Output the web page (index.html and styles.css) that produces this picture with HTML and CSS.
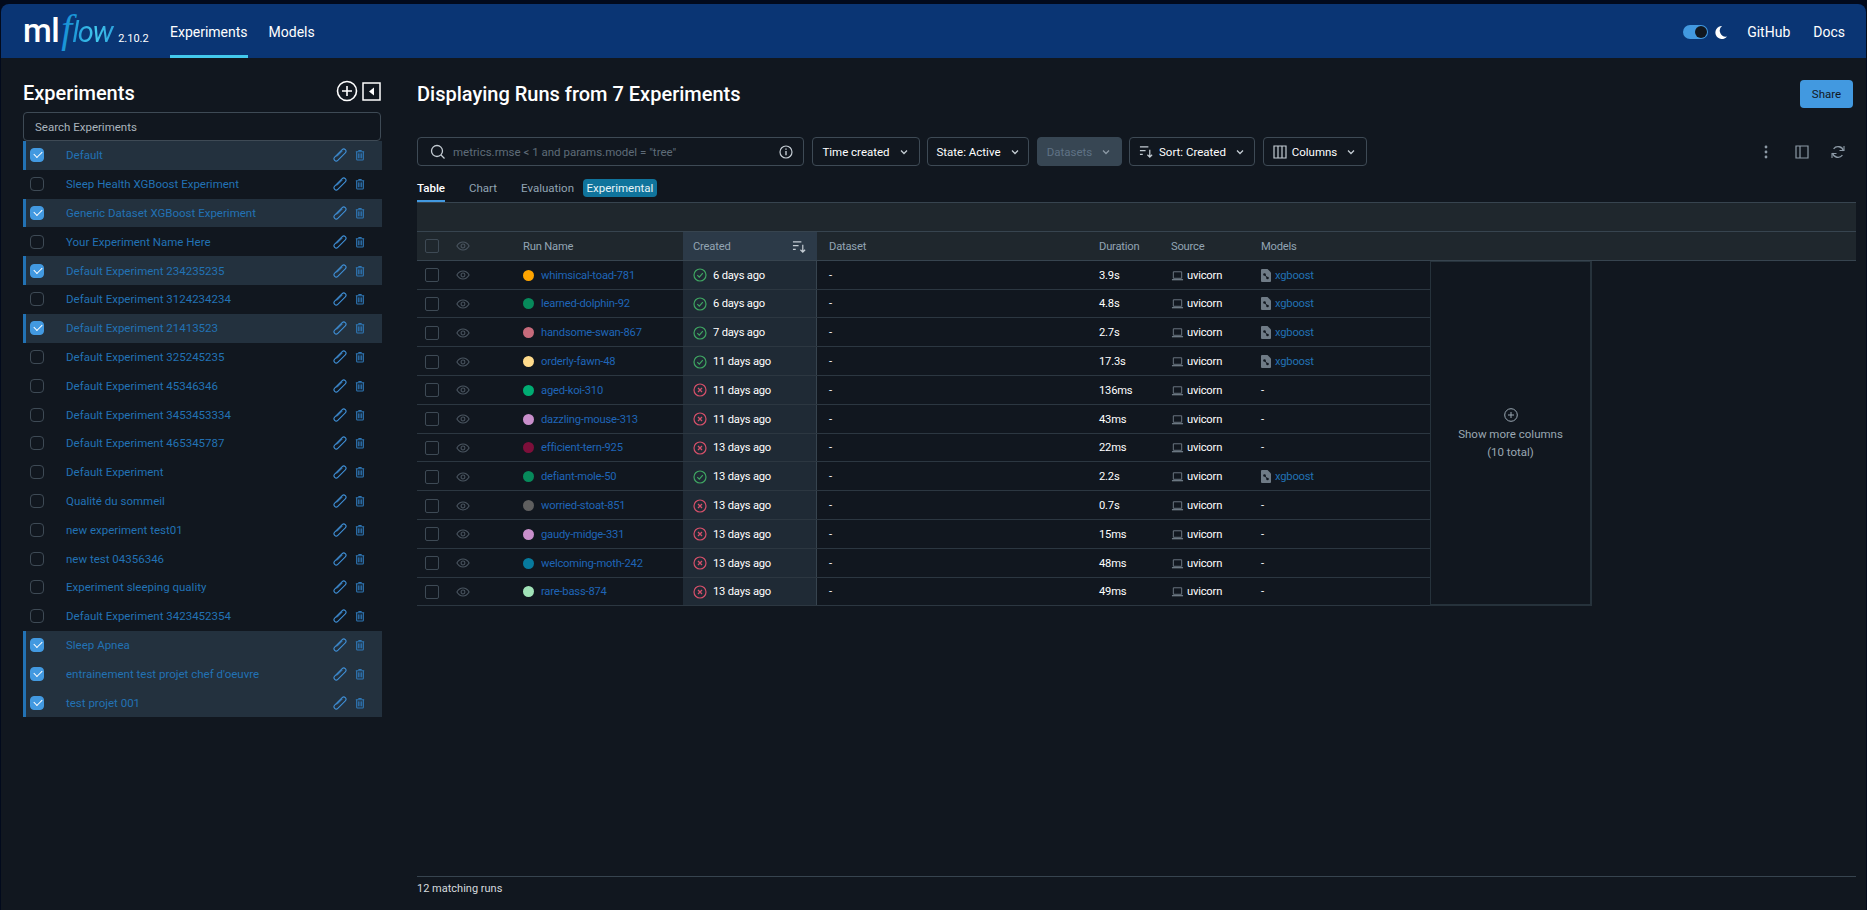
FILE: index.html
```html
<!DOCTYPE html>
<html lang="en">
<head>
    <meta charset="UTF-8">
    <title>MLflow</title>
    <link rel="stylesheet" href="styles.css">
</head>
<body>

    <!-- Icons -->
    <svg class="sprite" width="0" height="0">
        <symbol id="i-pencil" viewBox="0 0 14 14"><rect x="4.800" y="-0.500" width="4.400" height="15" rx="2.200" transform="rotate(45 7 7)" fill="none" stroke="currentColor" stroke-width="1.100"/><path d="M9.500 2.800L3.800 8.500" stroke="currentColor" stroke-width="1"/></symbol>
        <symbol id="i-trash" viewBox="0 0 12 14"><path d="M4 1.500h4M1 3h10M2 3v9a1 1 0 0 0 1 1h6a1 1 0 0 0 1-1V3" fill="none" stroke="currentColor" stroke-width="1.300"/><path d="M4 5v6M6 5v6M8 5v6" stroke="currentColor" stroke-width="1.200"/></symbol>
        <symbol id="i-eye" viewBox="0 0 16 16"><path d="M1 8c1.800-3 4.200-4.500 7-4.500S13.200 5 15 8c-1.800 3-4.200 4.500-7 4.500S2.800 11 1 8z" fill="none" stroke="currentColor" stroke-width="1.200"/><circle cx="8" cy="8" r="2.200" fill="none" stroke="currentColor" stroke-width="1.200"/></symbol>
        <symbol id="i-ok" viewBox="0 0 14 14"><circle cx="7" cy="7" r="6" fill="none" stroke="currentColor" stroke-width="1.200"/><path d="M4.300 7.200l2 2 3.500-4" fill="none" stroke="currentColor" stroke-width="1.200"/></symbol>
        <symbol id="i-fail" viewBox="0 0 14 14"><circle cx="7" cy="7" r="6" fill="none" stroke="currentColor" stroke-width="1.200"/><path d="M5 5l4 4M9 5l-4 4" fill="none" stroke="currentColor" stroke-width="1.300"/></symbol>
        <symbol id="i-laptop" viewBox="0 0 14 14"><path d="M2.500 3h9v7h-9z" fill="none" stroke="currentColor" stroke-width="1"/><path d="M1 11.500h12" stroke="currentColor" stroke-width="1.400"/></symbol>
        <symbol id="i-model" viewBox="0 0 10 13"><path d="M1 0h5.500L10 3.500V12a1 1 0 0 1-1 1H1a1 1 0 0 1-1-1V1a1 1 0 0 1 1-1z" fill="currentColor"/><circle cx="3.500" cy="5.500" r="1.300" fill="#11171f"/><circle cx="6.500" cy="9" r="1.300" fill="#11171f"/><path d="M3.500 5.500l3 3.500" stroke="#11171f"/></symbol>
        <symbol id="i-chevron" viewBox="0 0 10 10"><path d="M2 3.500l3 3 3-3" fill="none" stroke="currentColor" stroke-width="1.300"/></symbol>
        <symbol id="i-sort" viewBox="0 0 16 16"><path d="M1 3h9M1 7h6M1 11h3M11.500 6v8M9 11.500l2.500 2.500 2.500-2.500" fill="none" stroke="currentColor" stroke-width="1.300"/></symbol>
    </svg>

    <div class="app">

        <!-- Top bar -->
        <header class="topbar">
            <div class="logo">
                <span class="logo-ml">ml</span><span class="logo-f">f</span><span class="logo-low">low</span>
                <span class="version">2.10.2</span>
            </div>
            <nav class="nav">
                <a class="nav-link active" href="#">Experiments</a>
                <a class="nav-link" href="#">Models</a>
            </nav>
            <div class="topbar-right">
                <span class="toggle"><span class="toggle-knob"></span></span>
                <svg class="moon" viewBox="0 0 12 13" width="12" height="13"><path d="M7 0a6.500 6.500 0 1 0 5 10.500A6 6 0 0 1 7 0z" fill="#fff"/></svg>
                <a class="top-link" href="#">GitHub</a>
                <a class="top-link" href="#">Docs</a>
            </div>
        </header>

        <div class="content">

            <!-- Experiment list -->
            <aside class="sidebar">
                <div class="side-head">
                    <h2>Experiments</h2>
                    <svg class="side-plus" viewBox="0 0 22 22" width="22" height="22"><circle cx="11" cy="11" r="9.500" fill="none" stroke="#fff" stroke-width="1.600"/><path d="M11 6v10M6 11h10" stroke="#fff" stroke-width="1.600"/></svg>
                    <svg class="side-collapse" viewBox="0 0 19 19" width="19" height="19"><rect x="1" y="1" width="17" height="17" fill="none" stroke="#fff" stroke-width="1.500"/><path d="M7 9.500l5-4v8z" fill="#fff"/></svg>
                </div>
                <div class="side-search">Search Experiments</div>
                <ul class="exp-list">
                    <li class="exp on"><span class="check"></span><span class="exp-name">Default</span><svg class="pen"><use href="#i-pencil"/></svg><svg class="bin"><use href="#i-trash"/></svg></li>
                    <li class="exp"><span class="check"></span><span class="exp-name">Sleep Health XGBoost Experiment</span><svg class="pen"><use href="#i-pencil"/></svg><svg class="bin"><use href="#i-trash"/></svg></li>
                    <li class="exp on"><span class="check"></span><span class="exp-name">Generic Dataset XGBoost Experiment</span><svg class="pen"><use href="#i-pencil"/></svg><svg class="bin"><use href="#i-trash"/></svg></li>
                    <li class="exp"><span class="check"></span><span class="exp-name">Your Experiment Name Here</span><svg class="pen"><use href="#i-pencil"/></svg><svg class="bin"><use href="#i-trash"/></svg></li>
                    <li class="exp on"><span class="check"></span><span class="exp-name">Default Experiment 234235235</span><svg class="pen"><use href="#i-pencil"/></svg><svg class="bin"><use href="#i-trash"/></svg></li>
                    <li class="exp"><span class="check"></span><span class="exp-name">Default Experiment 3124234234</span><svg class="pen"><use href="#i-pencil"/></svg><svg class="bin"><use href="#i-trash"/></svg></li>
                    <li class="exp on"><span class="check"></span><span class="exp-name">Default Experiment 21413523</span><svg class="pen"><use href="#i-pencil"/></svg><svg class="bin"><use href="#i-trash"/></svg></li>
                    <li class="exp"><span class="check"></span><span class="exp-name">Default Experiment 325245235</span><svg class="pen"><use href="#i-pencil"/></svg><svg class="bin"><use href="#i-trash"/></svg></li>
                    <li class="exp"><span class="check"></span><span class="exp-name">Default Experiment 45346346</span><svg class="pen"><use href="#i-pencil"/></svg><svg class="bin"><use href="#i-trash"/></svg></li>
                    <li class="exp"><span class="check"></span><span class="exp-name">Default Experiment 3453453334</span><svg class="pen"><use href="#i-pencil"/></svg><svg class="bin"><use href="#i-trash"/></svg></li>
                    <li class="exp"><span class="check"></span><span class="exp-name">Default Experiment 465345787</span><svg class="pen"><use href="#i-pencil"/></svg><svg class="bin"><use href="#i-trash"/></svg></li>
                    <li class="exp"><span class="check"></span><span class="exp-name">Default Experiment</span><svg class="pen"><use href="#i-pencil"/></svg><svg class="bin"><use href="#i-trash"/></svg></li>
                    <li class="exp"><span class="check"></span><span class="exp-name">Qualité du sommeil</span><svg class="pen"><use href="#i-pencil"/></svg><svg class="bin"><use href="#i-trash"/></svg></li>
                    <li class="exp"><span class="check"></span><span class="exp-name">new experiment test01</span><svg class="pen"><use href="#i-pencil"/></svg><svg class="bin"><use href="#i-trash"/></svg></li>
                    <li class="exp"><span class="check"></span><span class="exp-name">new test 04356346</span><svg class="pen"><use href="#i-pencil"/></svg><svg class="bin"><use href="#i-trash"/></svg></li>
                    <li class="exp"><span class="check"></span><span class="exp-name">Experiment sleeping quality</span><svg class="pen"><use href="#i-pencil"/></svg><svg class="bin"><use href="#i-trash"/></svg></li>
                    <li class="exp"><span class="check"></span><span class="exp-name">Default Experiment 3423452354</span><svg class="pen"><use href="#i-pencil"/></svg><svg class="bin"><use href="#i-trash"/></svg></li>
                    <li class="exp on"><span class="check"></span><span class="exp-name">Sleep Apnea</span><svg class="pen"><use href="#i-pencil"/></svg><svg class="bin"><use href="#i-trash"/></svg></li>
                    <li class="exp on"><span class="check"></span><span class="exp-name">entrainement test projet chef d'oeuvre</span><svg class="pen"><use href="#i-pencil"/></svg><svg class="bin"><use href="#i-trash"/></svg></li>
                    <li class="exp on"><span class="check"></span><span class="exp-name">test projet 001</span><svg class="pen"><use href="#i-pencil"/></svg><svg class="bin"><use href="#i-trash"/></svg></li>
                </ul>
            </aside>

            <!-- Runs -->
            <main class="main">
                <div class="title-row">
                    <h1>Displaying Runs from 7 Experiments</h1>
                    <button class="share">Share</button>
                </div>

                <div class="filters">
                    <div class="search">
                        <svg viewBox="0 0 16 16" width="16" height="16"><circle cx="7" cy="7" r="5.500" fill="none" stroke="#c4ccd3" stroke-width="1.300"/><path d="M11 11l3.500 3.500" stroke="#c4ccd3" stroke-width="1.300"/></svg>
                        <span class="search-text">metrics.rmse &lt; 1 and params.model = "tree"</span>
                        <svg viewBox="0 0 14 14" width="14" height="14"><circle cx="7" cy="7" r="6" fill="none" stroke="#c4ccd3" stroke-width="1.200"/><path d="M7 6v4.200M7 3.600v1.200" stroke="#c4ccd3" stroke-width="1.400"/></svg>
                    </div>
                    <button class="drop w-time">Time created <svg class="chev"><use href="#i-chevron"/></svg></button>
                    <button class="drop w-state">State: Active <svg class="chev"><use href="#i-chevron"/></svg></button>
                    <button class="drop w-data disabled">Datasets <svg class="chev"><use href="#i-chevron"/></svg></button>
                    <button class="drop w-sort"><svg class="ico16"><use href="#i-sort"/></svg> Sort: Created <svg class="chev"><use href="#i-chevron"/></svg></button>
                    <button class="drop w-cols">
                        <svg viewBox="0 0 14 14" width="14" height="14"><path d="M1 1h12v12H1zM5 1v12M9 1v12" fill="none" stroke="#c4ccd3" stroke-width="1.200"/></svg>
                        Columns <svg class="chev"><use href="#i-chevron"/></svg>
                    </button>
                    <div class="tools">
                        <svg viewBox="0 0 4 14" width="4" height="14"><circle cx="2" cy="2" r="1.400" fill="#8c99a5"/><circle cx="2" cy="7" r="1.400" fill="#8c99a5"/><circle cx="2" cy="12" r="1.400" fill="#8c99a5"/></svg>
                        <svg class="tool-panel" viewBox="0 0 14 14" width="14" height="14"><path d="M1 1h12v12H1zM5 1v12" fill="none" stroke="#8c99a5" stroke-width="1.200"/></svg>
                        <svg viewBox="0 0 14 14" width="14" height="14"><path d="M12.500 6A5.600 5.600 0 0 0 2.600 3.800M1.500 8a5.600 5.600 0 0 0 9.900 2.200" fill="none" stroke="#8c99a5" stroke-width="1.300"/><path d="M13 1v4.500H8.500M1 13V8.500h4.500" fill="none" stroke="#8c99a5" stroke-width="1.100"/></svg>
                    </div>
                </div>

                <div class="tabs">
                    <a class="tab active" href="#">Table</a>
                    <a class="tab" href="#">Chart</a>
                    <a class="tab" href="#">Evaluation</a>
                    <span class="tag">Experimental</span>
                </div>

                <div class="group-head"></div>
                <div class="row head-row">
                    <span class="c-check"><span class="box"></span></span>
                    <span class="c-eye"><svg class="eye"><use href="#i-eye"/></svg></span>
                    <span class="c-name">Run Name</span>
                    <span class="c-created">Created <svg class="ico16"><use href="#i-sort"/></svg></span>
                    <span class="c-data">Dataset</span>
                    <span class="c-dur">Duration</span>
                    <span class="c-src">Source</span>
                    <span class="c-model">Models</span>
                </div>

                <div class="runs">
                    <div class="run-rows">
                        <div class="row"><span class="c-check"><span class="box"></span></span><span class="c-eye"><svg class="eye"><use href="#i-eye"/></svg></span><span class="c-name"><i class="dot d-orange"></i><a href="#">whimsical-toad-781</a></span><span class="c-created"><svg class="st ok"><use href="#i-ok"/></svg><b>6 days ago</b></span><span class="c-data">-</span><span class="c-dur">3.9s</span><span class="c-src"><svg class="lap"><use href="#i-laptop"/></svg>uvicorn</span><span class="c-model"><svg class="mod"><use href="#i-model"/></svg><a href="#">xgboost</a></span></div>
                        <div class="row"><span class="c-check"><span class="box"></span></span><span class="c-eye"><svg class="eye"><use href="#i-eye"/></svg></span><span class="c-name"><i class="dot d-green"></i><a href="#">learned-dolphin-92</a></span><span class="c-created"><svg class="st ok"><use href="#i-ok"/></svg><b>6 days ago</b></span><span class="c-data">-</span><span class="c-dur">4.8s</span><span class="c-src"><svg class="lap"><use href="#i-laptop"/></svg>uvicorn</span><span class="c-model"><svg class="mod"><use href="#i-model"/></svg><a href="#">xgboost</a></span></div>
                        <div class="row"><span class="c-check"><span class="box"></span></span><span class="c-eye"><svg class="eye"><use href="#i-eye"/></svg></span><span class="c-name"><i class="dot d-rose"></i><a href="#">handsome-swan-867</a></span><span class="c-created"><svg class="st ok"><use href="#i-ok"/></svg><b>7 days ago</b></span><span class="c-data">-</span><span class="c-dur">2.7s</span><span class="c-src"><svg class="lap"><use href="#i-laptop"/></svg>uvicorn</span><span class="c-model"><svg class="mod"><use href="#i-model"/></svg><a href="#">xgboost</a></span></div>
                        <div class="row"><span class="c-check"><span class="box"></span></span><span class="c-eye"><svg class="eye"><use href="#i-eye"/></svg></span><span class="c-name"><i class="dot d-sand"></i><a href="#">orderly-fawn-48</a></span><span class="c-created"><svg class="st ok"><use href="#i-ok"/></svg><b>11 days ago</b></span><span class="c-data">-</span><span class="c-dur">17.3s</span><span class="c-src"><svg class="lap"><use href="#i-laptop"/></svg>uvicorn</span><span class="c-model"><svg class="mod"><use href="#i-model"/></svg><a href="#">xgboost</a></span></div>
                        <div class="row"><span class="c-check"><span class="box"></span></span><span class="c-eye"><svg class="eye"><use href="#i-eye"/></svg></span><span class="c-name"><i class="dot d-mint"></i><a href="#">aged-koi-310</a></span><span class="c-created"><svg class="st bad"><use href="#i-fail"/></svg><b>11 days ago</b></span><span class="c-data">-</span><span class="c-dur">136ms</span><span class="c-src"><svg class="lap"><use href="#i-laptop"/></svg>uvicorn</span><span class="c-model">-</span></div>
                        <div class="row"><span class="c-check"><span class="box"></span></span><span class="c-eye"><svg class="eye"><use href="#i-eye"/></svg></span><span class="c-name"><i class="dot d-lilac"></i><a href="#">dazzling-mouse-313</a></span><span class="c-created"><svg class="st bad"><use href="#i-fail"/></svg><b>11 days ago</b></span><span class="c-data">-</span><span class="c-dur">43ms</span><span class="c-src"><svg class="lap"><use href="#i-laptop"/></svg>uvicorn</span><span class="c-model">-</span></div>
                        <div class="row"><span class="c-check"><span class="box"></span></span><span class="c-eye"><svg class="eye"><use href="#i-eye"/></svg></span><span class="c-name"><i class="dot d-wine"></i><a href="#">efficient-tern-925</a></span><span class="c-created"><svg class="st bad"><use href="#i-fail"/></svg><b>13 days ago</b></span><span class="c-data">-</span><span class="c-dur">22ms</span><span class="c-src"><svg class="lap"><use href="#i-laptop"/></svg>uvicorn</span><span class="c-model">-</span></div>
                        <div class="row"><span class="c-check"><span class="box"></span></span><span class="c-eye"><svg class="eye"><use href="#i-eye"/></svg></span><span class="c-name"><i class="dot d-green"></i><a href="#">defiant-mole-50</a></span><span class="c-created"><svg class="st ok"><use href="#i-ok"/></svg><b>13 days ago</b></span><span class="c-data">-</span><span class="c-dur">2.2s</span><span class="c-src"><svg class="lap"><use href="#i-laptop"/></svg>uvicorn</span><span class="c-model"><svg class="mod"><use href="#i-model"/></svg><a href="#">xgboost</a></span></div>
                        <div class="row"><span class="c-check"><span class="box"></span></span><span class="c-eye"><svg class="eye"><use href="#i-eye"/></svg></span><span class="c-name"><i class="dot d-grey"></i><a href="#">worried-stoat-851</a></span><span class="c-created"><svg class="st bad"><use href="#i-fail"/></svg><b>13 days ago</b></span><span class="c-data">-</span><span class="c-dur">0.7s</span><span class="c-src"><svg class="lap"><use href="#i-laptop"/></svg>uvicorn</span><span class="c-model">-</span></div>
                        <div class="row"><span class="c-check"><span class="box"></span></span><span class="c-eye"><svg class="eye"><use href="#i-eye"/></svg></span><span class="c-name"><i class="dot d-lilac"></i><a href="#">gaudy-midge-331</a></span><span class="c-created"><svg class="st bad"><use href="#i-fail"/></svg><b>13 days ago</b></span><span class="c-data">-</span><span class="c-dur">15ms</span><span class="c-src"><svg class="lap"><use href="#i-laptop"/></svg>uvicorn</span><span class="c-model">-</span></div>
                        <div class="row"><span class="c-check"><span class="box"></span></span><span class="c-eye"><svg class="eye"><use href="#i-eye"/></svg></span><span class="c-name"><i class="dot d-teal"></i><a href="#">welcoming-moth-242</a></span><span class="c-created"><svg class="st bad"><use href="#i-fail"/></svg><b>13 days ago</b></span><span class="c-data">-</span><span class="c-dur">48ms</span><span class="c-src"><svg class="lap"><use href="#i-laptop"/></svg>uvicorn</span><span class="c-model">-</span></div>
                        <div class="row"><span class="c-check"><span class="box"></span></span><span class="c-eye"><svg class="eye"><use href="#i-eye"/></svg></span><span class="c-name"><i class="dot d-pale"></i><a href="#">rare-bass-874</a></span><span class="c-created"><svg class="st bad"><use href="#i-fail"/></svg><b>13 days ago</b></span><span class="c-data">-</span><span class="c-dur">49ms</span><span class="c-src"><svg class="lap"><use href="#i-laptop"/></svg>uvicorn</span><span class="c-model">-</span></div>
                    </div>
                    <div class="more-cols">
                        <svg viewBox="0 0 14 14" width="14" height="14"><circle cx="7" cy="7" r="6.300" fill="none" stroke="#9aa7b2" stroke-width="1"/><path d="M7 4v6M4 7h6" stroke="#9aa7b2" stroke-width="1"/></svg>
                        <span>Show more columns</span>
                        <span>(10 total)</span>
                    </div>
                </div>

                <div class="foot">12 matching runs</div>
            </main>
        </div>
    </div>

</body>
</html>
```

FILE: styles.css
```css
* {
    box-sizing: border-box;
}

html, body {
    height: 100%;
}

body {
    margin: 0;
    background-color: #020a1c;
    color: #e4e8ec;
    font-family: Roboto, "Open Sans", sans-serif;
    font-size: 11.500px;
    overflow: hidden;
}

a {
    text-decoration: none;
    color: inherit;
}

.sprite {
    position: absolute;
}

.app {
    height: 100%;
    padding: 4px 1px 0;
    display: flex;
    flex-direction: column;
}

/* top bar */
.topbar {
    height: 54px;
    flex: none;
    background-color: #0a3574;
    border-radius: 8px 8px 0 0;
    display: flex;
    align-items: stretch;
    padding: 0 21px 0 22px;
    color: #fff;
}

.logo {
    width: 147px;
    display: flex;
    align-items: baseline;
    padding-top: 7px;
    line-height: 36px;
}

.logo-ml {
    font-size: 33px;
    font-weight: 500;
    letter-spacing: -0.5px;
}

.logo-f {
    font-family: "Liberation Serif", serif;
    font-size: 40px;
    font-style: italic;
    color: #1b96d8;
    margin: 0 0 0 2px;
}

.logo-low {
    font-size: 29px;
    font-style: italic;
    letter-spacing: -1.400px;
    padding-right: 3px;
    background: linear-gradient(90deg, #1b96d8, #43c9ed 55%, #2a9fdc);
    -webkit-background-clip: text;
    background-clip: text;
    color: transparent;
}

.version {
    font-size: 11px;
    margin-left: 3px;
}

.nav {
    display: flex;
    gap: 21px;
}

.nav-link {
    font-size: 14px;
    display: flex;
    align-items: center;
    border-bottom: 3px solid transparent;
    padding-top: 5px;
}

.nav-link.active {
    border-bottom-color: #43c9ed;
}

.topbar-right {
    margin-left: auto;
    display: flex;
    align-items: center;
    font-size: 14px;
    padding-top: 2px;
}

.toggle {
    width: 25px;
    height: 14px;
    border-radius: 7px;
    background-color: #4299e0;
    display: flex;
    justify-content: flex-end;
    padding: 1px;
}

.toggle-knob {
    width: 12px;
    height: 12px;
    border-radius: 50%;
    background-color: #11171f;
}

.moon {
    margin: 0 20px 0 7px;
}

.top-link + .top-link {
    margin-left: 23px;
}

/* layout */
.content {
    flex: 1;
    display: flex;
    background-color: #11171f;
    min-height: 0;
}

/* sidebar */
.sidebar {
    width: 359px;
    margin-left: 22px;
    flex: none;
}

.side-head {
    height: 54px;
    display: flex;
    align-items: center;
    padding: 12px 1px 0 0;
}

.side-head h2 {
    margin: 4px auto 0 0;
    font-size: 20px;
    font-weight: 500;
    color: #fff;
}

.side-plus {
    margin-right: 4px;
}

.side-search {
    height: 29px;
    width: 358px;
    border: 1px solid #3e4a55;
    border-radius: 4px;
    padding-left: 11px;
    line-height: 28px;
    color: #aab4bd;
}

.exp-list {
    list-style: none;
    margin: 0;
    padding: 0;
}

.exp {
    height: 28.8px;
    display: flex;
    align-items: center;
    padding-left: 7px;
    color: #2272b4;
}

.exp.on {
    background-color: #23313e;
    border-left: 3px solid #2272b4;
    padding-left: 4px;
}

.check {
    width: 14px;
    height: 14px;
    border: 1px solid #3e4a55;
    border-radius: 4px;
    flex: none;
}

.exp.on .check {
    background-color: #4299e0;
    border-color: #4299e0;
    position: relative;
}

.exp.on .check::after {
    content: "";
    position: absolute;
    left: 3px;
    top: 2px;
    width: 7px;
    height: 4px;
    border-left: 1.300px solid #fff;
    border-bottom: 1.300px solid #fff;
    transform: rotate(-45deg);
}

.exp-name {
    margin-left: 22px;
    flex: 1;
}

.pen {
    width: 14px;
    height: 14px;
    color: #3f8fd6;
}

.bin {
    width: 10px;
    height: 12px;
    margin: 0 17px 0 8px;
    color: #2f78b8;
}

/* main */
.main {
    flex: 1;
    margin: 0 10px 0 35px;
    display: flex;
    flex-direction: column;
    min-width: 0;
}

.title-row {
    display: flex;
    justify-content: space-between;
    align-items: center;
    height: 79px;
    padding: 0 3px 7px 0;
    flex: none;
}

.title-row h1 {
    margin: 0;
    font-size: 20px;
    font-weight: 500;
    color: #fff;
}

.share {
    width: 53px;
    height: 28px;
    border: none;
    border-radius: 4px;
    background-color: #4299e0;
    color: #11171f;
    font: inherit;
}

.filters {
    display: flex;
    align-items: center;
    gap: 7.500px;
    flex: none;
}

.search {
    width: 387px;
    height: 29px;
    border: 1px solid #3e4a55;
    border-radius: 4px;
    display: flex;
    align-items: center;
    padding: 0 10px 0 12px;
}

.search-text {
    flex: 1;
    margin-left: 7px;
    color: #5f6c78;
}

.drop {
    height: 29px;
    border: 1px solid #3e4a55;
    border-radius: 4px;
    background: none;
    color: #fff;
    font: inherit;
    display: flex;
    align-items: center;
    justify-content: center;
    gap: 5px;
    padding: 0;
}

.w-time { width: 108px; }
.w-state { width: 102px; }
.w-data { width: 85px; }
.w-sort { width: 126px; }
.w-cols { width: 104px; }

.drop.disabled {
    background-color: #374653;
    border-color: #374653;
    color: #5f7285;
}

.chev {
    width: 10px;
    height: 10px;
    margin-left: 4px;
    color: #c4ccd3;
}

.disabled .chev {
    color: #8c99a5;
}

.ico16 {
    width: 15px;
    height: 15px;
    color: #c4ccd3;
}

.tools {
    margin-left: auto;
    display: flex;
    align-items: center;
    padding-right: 11px;
}

.tool-panel {
    margin: 0 22px 0 27px;
}

.tabs {
    margin-top: 12px;
    height: 24px;
    flex: none;
    display: flex;
    align-items: flex-start;
}

.tab {
    height: 24px;
    line-height: 20px;
    color: #92a4b3;
    margin-right: 24px;
}

.tab.active {
    color: #fff;
    font-weight: 500;
    border-bottom: 2px solid #4299e0;
}

.tab:nth-child(3) {
    margin-right: 9px;
}

.tag {
    height: 18px;
    margin-top: 1px;
    line-height: 18px;
    padding: 0 3.500px;
    border-radius: 4px;
    background-color: #10749c;
    color: #e8f4f8;
}

.group-head {
    height: 30px;
    flex: none;
    background-color: #1f272d;
    border-top: 1px solid #37444f;
    border-bottom: 1px solid #37444f;
}

/* table */
.row {
    height: 28.8px;
    flex: none;
    display: grid;
    grid-template-columns: 39px 67px 160px 134px 282px 72px 90px 169px;
    align-items: stretch;
    border-bottom: 1px solid #2c3741;
    color: #fff;
    font-size: 11.200px;
    letter-spacing: -0.2px;
}

.row > span {
    display: flex;
    align-items: center;
    min-width: 0;
    padding-top: 1px;
}

.c-check {
    padding-left: 8px;
}

.box {
    width: 14px;
    height: 14px;
    border: 1px solid #3e4a55;
    border-radius: 2px;
}

.eye {
    width: 14px;
    height: 14px;
    color: #4a5560;
}

.dot {
    width: 11px;
    height: 11px;
    border-radius: 50%;
    margin-right: 7px;
    flex: none;
}

.d-orange { background-color: #ffa500; }
.d-green { background-color: #078a5b; }
.d-rose { background-color: #c76b7b; }
.d-sand { background-color: #ffdb8c; }
.d-mint { background-color: #00ac72; }
.d-lilac { background-color: #c98fcb; }
.d-wine { background-color: #7d0f3a; }
.d-grey { background-color: #5f5f5f; }
.d-teal { background-color: #077a9d; }
.d-pale { background-color: #a1e3b8; }

.c-name a {
    color: #1f65b7;
}

.c-created {
    background-color: #1f2a35;
    border-right: 1px solid #37444f;
    padding-left: 10px;
}

.c-created b {
    font-weight: 400;
}

.st {
    width: 14px;
    height: 14px;
    margin-right: 6px;
    flex: none;
}

.ok { color: #3fa562; }
.bad { color: #d6506a; }

.c-data {
    padding-left: 12px;
}

.lap {
    width: 13px;
    height: 13px;
    margin-right: 3px;
    color: #6f7b86;
}

.mod {
    width: 10px;
    height: 13px;
    margin-right: 4px;
    color: #6f7b86;
}

.c-model a {
    color: #2272b4;
}

.head-row {
    background-color: #1f272d;
    border-bottom-color: #37444f;
    color: #92a4b3;
}

.head-row .c-created {
    background-color: #2c3a48;
    justify-content: space-between;
    padding-right: 10px;
    border-right: none;
}

.runs {
    display: flex;
    align-items: flex-start;
}

.run-rows {
    width: 1013px;
    flex: none;
}

.more-cols {
    width: 162px;
    height: 345.600px;
    border: 1px solid #26323b;
    border-bottom-width: 2px;
    border-right-width: 2px;
    display: flex;
    flex-direction: column;
    align-items: center;
    justify-content: center;
    padding-top: 2px;
    color: #9aa7b2;
    line-height: 18px;
}

.more-cols svg {
    margin-bottom: 3px;
}

.foot {
    margin-top: auto;
    height: 34px;
    border-top: 1px solid #37444f;
    padding-top: 5px;
    color: #d5dade;
    font-size: 11px;
}
```
